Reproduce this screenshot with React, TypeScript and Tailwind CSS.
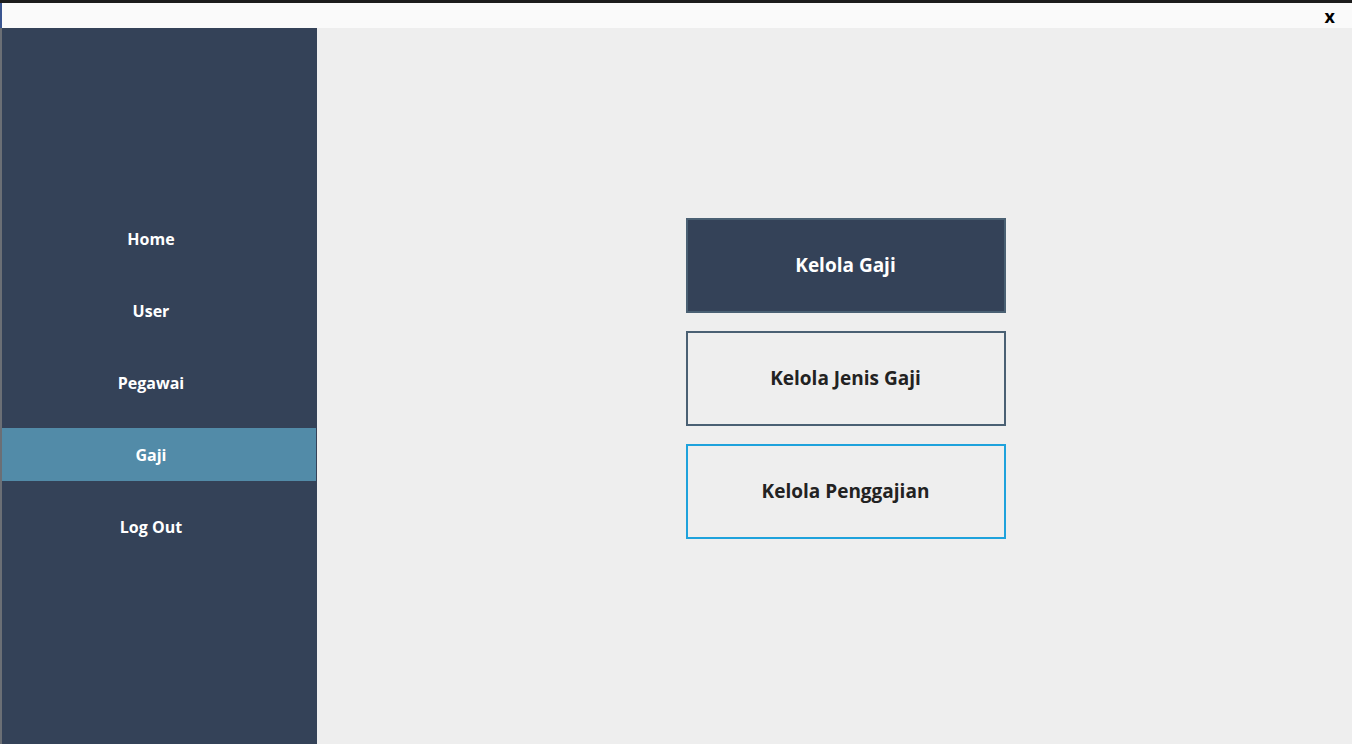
const menu = ["Home", "User", "Pegawai", "Gaji", "Log Out"];

function SideItem({ label, active }: { label: string; active?: boolean }) {
    return (
        <div
            className={
                "flex h-[53px] items-center justify-center pr-[16px] text-[16px] font-bold text-white " +
                (active ? "bg-[#528ba8]" : "")
            }
        >
            {label}
        </div>
    );
}

export default function App() {
    return (
        <div className="flex h-[744px] w-[1352px] flex-col overflow-hidden bg-[#eeeeee] font-['Open_Sans',sans-serif]">
            <div className="h-[3px] bg-[#1c1c1c]" />
            <div className="flex h-[25px] items-center justify-end border-l-2 border-[#3a5590] bg-[#fafafa] pr-[17px]">
                <span className="text-[18px] leading-none font-bold text-black">x</span>
            </div>
            <div className="flex flex-1">
                <aside className="flex w-[317px] flex-col border-l-2 border-[#6b6f75] bg-[#344258] pt-[184px]">
                    <div className="flex flex-col gap-[19px] pr-px">
                        <SideItem label={menu[0]} />
                        <SideItem label={menu[1]} />
                        <SideItem label={menu[2]} />
                        <SideItem label={menu[3]} active />
                        <SideItem label={menu[4]} />
                    </div>
                </aside>
                <main className="flex flex-1 flex-col items-center pt-[190px] pl-[22px]">
                    <div className="flex w-[320px] flex-col gap-[18px]">
                        <button className="flex h-[95px] items-center justify-center border-2 border-[#4a6073] bg-[#344258] text-[19px] font-bold text-white">
                            Kelola Gaji
                        </button>
                        <button className="flex h-[95px] items-center justify-center border-2 border-[#4a6073] bg-[#eeeeee] text-[19px] font-bold text-[#222222]">
                            Kelola Jenis Gaji
                        </button>
                        <button className="flex h-[95px] items-center justify-center border-2 border-[#1ea2dc] bg-[#eeeeee] text-[19px] font-bold text-[#222222]">
                            Kelola Penggajian
                        </button>
                    </div>
                </main>
            </div>
        </div>
    );
}
